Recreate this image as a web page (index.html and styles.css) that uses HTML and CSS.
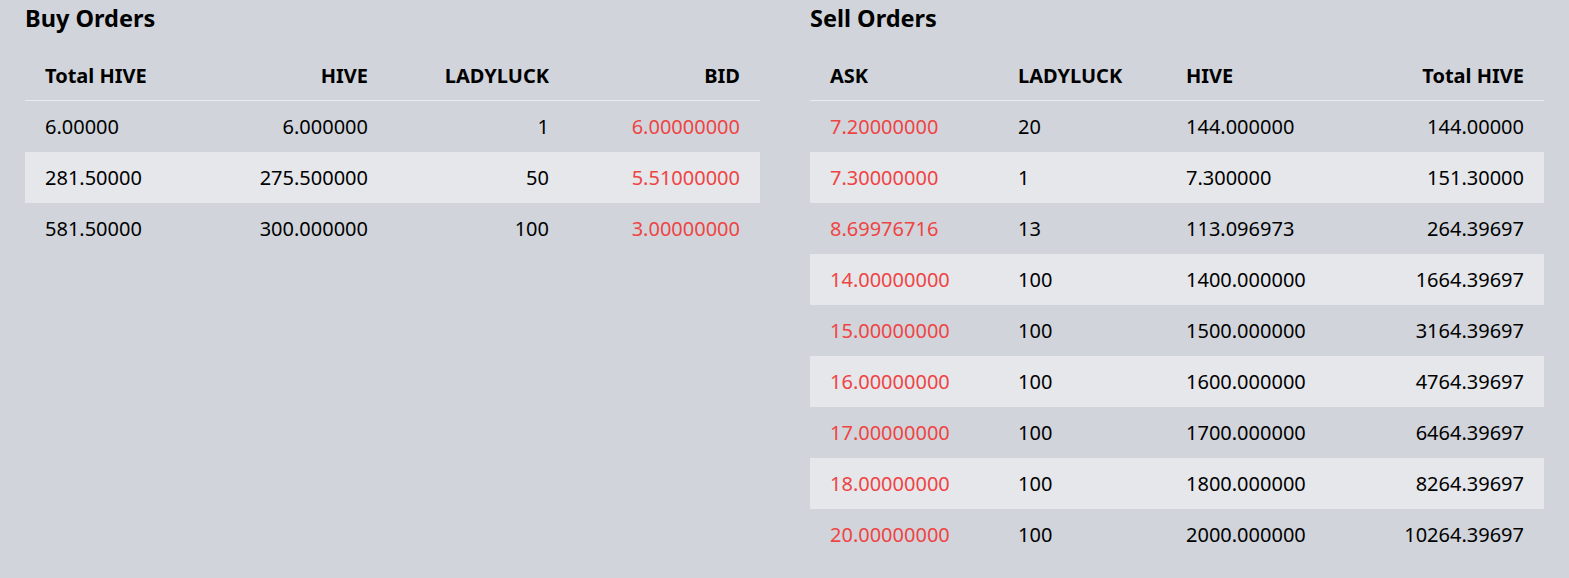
FILE: index.html
```html
<!DOCTYPE html>
<html>
<head>
<meta charset="utf-8">
<link rel="stylesheet" href="styles.css">
</head>
<body>
<div class="books">
  <section class="book">
    <h2 class="title">Buy Orders</h2>
    <table class="orders buy">
      <colgroup><col class="c182"><col class="c181"><col class="c181"><col class="c191"></colgroup>
      <thead>
        <tr><th class="l">Total HIVE</th><th class="r">HIVE</th><th class="r">LADYLUCK</th><th class="r">BID</th></tr>
      </thead>
      <tbody>
        <tr><td class="l">6.00000</td><td class="r">6.000000</td><td class="r">1</td><td class="r price">6.00000000</td></tr>
        <tr><td class="l">281.50000</td><td class="r">275.500000</td><td class="r">50</td><td class="r price">5.51000000</td></tr>
        <tr><td class="l">581.50000</td><td class="r">300.000000</td><td class="r">100</td><td class="r price">3.00000000</td></tr>
      </tbody>
    </table>
  </section>
  <section class="book">
    <h2 class="title">Sell Orders</h2>
    <table class="orders sell">
      <colgroup><col class="c188"><col class="c168"><col class="c189"><col class="c189"></colgroup>
      <thead>
        <tr><th class="l">ASK</th><th class="l">LADYLUCK</th><th class="l">HIVE</th><th class="r">Total HIVE</th></tr>
      </thead>
      <tbody>
        <tr><td class="l price">7.20000000</td><td class="l">20</td><td class="l">144.000000</td><td class="r">144.00000</td></tr>
        <tr><td class="l price">7.30000000</td><td class="l">1</td><td class="l">7.300000</td><td class="r">151.30000</td></tr>
        <tr><td class="l price">8.69976716</td><td class="l">13</td><td class="l">113.096973</td><td class="r">264.39697</td></tr>
        <tr><td class="l price">14.00000000</td><td class="l">100</td><td class="l">1400.000000</td><td class="r">1664.39697</td></tr>
        <tr><td class="l price">15.00000000</td><td class="l">100</td><td class="l">1500.000000</td><td class="r">3164.39697</td></tr>
        <tr><td class="l price">16.00000000</td><td class="l">100</td><td class="l">1600.000000</td><td class="r">4764.39697</td></tr>
        <tr><td class="l price">17.00000000</td><td class="l">100</td><td class="l">1700.000000</td><td class="r">6464.39697</td></tr>
        <tr><td class="l price">18.00000000</td><td class="l">100</td><td class="l">1800.000000</td><td class="r">8264.39697</td></tr>
        <tr><td class="l price">20.00000000</td><td class="l">100</td><td class="l">2000.000000</td><td class="r">10264.39697</td></tr>
      </tbody>
    </table>
  </section>
</div>
</body>
</html>
```

FILE: styles.css
```css
html, body {
  margin: 0;
  padding: 0;
  background: #d1d5db;
}
body {
  font-family: "Noto Sans", "Open Sans", sans-serif;
  color: #000;
}
.books {
  display: grid;
  grid-template-columns: 735px 734px;
  column-gap: 50px;
  padding: 0 25px;
}
.title {
  margin: 0;
  font-size: 23.5px;
  line-height: 36px;
  font-weight: 700;
}
.orders {
  margin-top: 14px;
  width: 100%;
  table-layout: fixed;
  border-collapse: collapse;
  border-spacing: 0;
  font-size: 20px;
}
.c182 { width: 182px; }
.c181 { width: 181px; }
.c191 { width: 191px; }
.c188 { width: 188px; }
.c168 { width: 168px; }
.c189 { width: 189px; }
.orders th {
  font-weight: 700;
  height: 50px;
  padding: 0 20px;
  border-bottom: 1px solid #e9ebef;
  white-space: nowrap;
}
.orders td {
  height: 51px;
  padding: 0 20px;
  white-space: nowrap;
}
.orders tbody tr:nth-child(even) {
  background: #e5e7eb;
}
.l { text-align: left; }
.r { text-align: right; }
.price { color: #ef4444; }
```
